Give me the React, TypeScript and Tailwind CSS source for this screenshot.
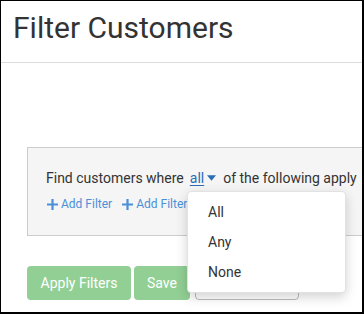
import React from 'react';

const font = { fontFamily: 'Roboto, "Liberation Sans", sans-serif' };

const AddFilter = () => (
  <button className="flex items-center gap-[3px] text-[12px] text-[#4a90d9] leading-none">
    <svg className="w-[11px] h-[11px]" viewBox="0 0 12 12" fill="currentColor">
      <path d="M4.8 0h2.4v4.8H12v2.4H7.2V12H4.8V7.2H0V4.8h4.8z" />
    </svg>
    Add Filter
  </button>
);

export default function App() {
  const options = ['All', 'Any', 'None'];

  return (
    <div
      className="relative w-[364px] h-[314px] overflow-hidden bg-white border-l border-t border-r-2 border-b-2 border-black text-[#333]"
      style={font}
    >
      {/* Header */}
      <div className="h-[62px] border-b border-[#ddd] px-[12px] pt-[9px]">
        <h1 className="text-[30px] leading-[36px] font-normal text-[#333]">Filter Customers</h1>
      </div>

      {/* Filter panel */}
      <div className="mt-[84px] ml-[26px] w-[360px] h-[89px] bg-[#f5f5f5] border border-[#ccc] pl-[18px] pt-[21px]">
        <div className="flex items-center text-[14px] leading-[18px] whitespace-nowrap">
          <span>Find customers where</span>
          <span className="ml-[6px] text-[#2a6db5] underline underline-offset-[2px]">all</span>
          <svg className="ml-[3px] w-[9px] h-[6px] text-[#2a6db5]" viewBox="0 0 10 6" fill="currentColor">
            <path d="M0 0h10L5 6z" />
          </svg>
          <span className="ml-[7px]">of the following apply</span>
        </div>
        <div className="flex gap-[10px] mt-[11px] ml-[1px]">
          <AddFilter />
          <AddFilter />
        </div>
      </div>

      {/* Actions */}
      <div className="flex gap-[3px] mt-[30px] ml-[26px]">
        <button className="w-[104px] h-[34px] rounded-[4px] bg-[#91cf94] text-white text-[14px]">Apply Filters</button>
        <button className="w-[56px] h-[34px] rounded-[4px] bg-[#91cf94] text-white text-[14px]">Save</button>
        <button className="ml-[2px] w-[104px] h-[34px] rounded-[4px] bg-white border border-[#bbb] text-[#333] text-[14px]"></button>
      </div>

      {/* Dropdown menu */}
      <div className="absolute left-[186px] top-[190px] w-[159px] py-[5px] bg-white rounded-[4px] border border-[#e2e2e2] shadow-[0_4px_12px_rgba(0,0,0,0.18)]">
        {options.map(o => (
          <div key={o} className="h-[30px] flex items-center pl-[20px] text-[14px] text-[#333]">
            {o}
          </div>
        ))}
      </div>
    </div>
  );
}
